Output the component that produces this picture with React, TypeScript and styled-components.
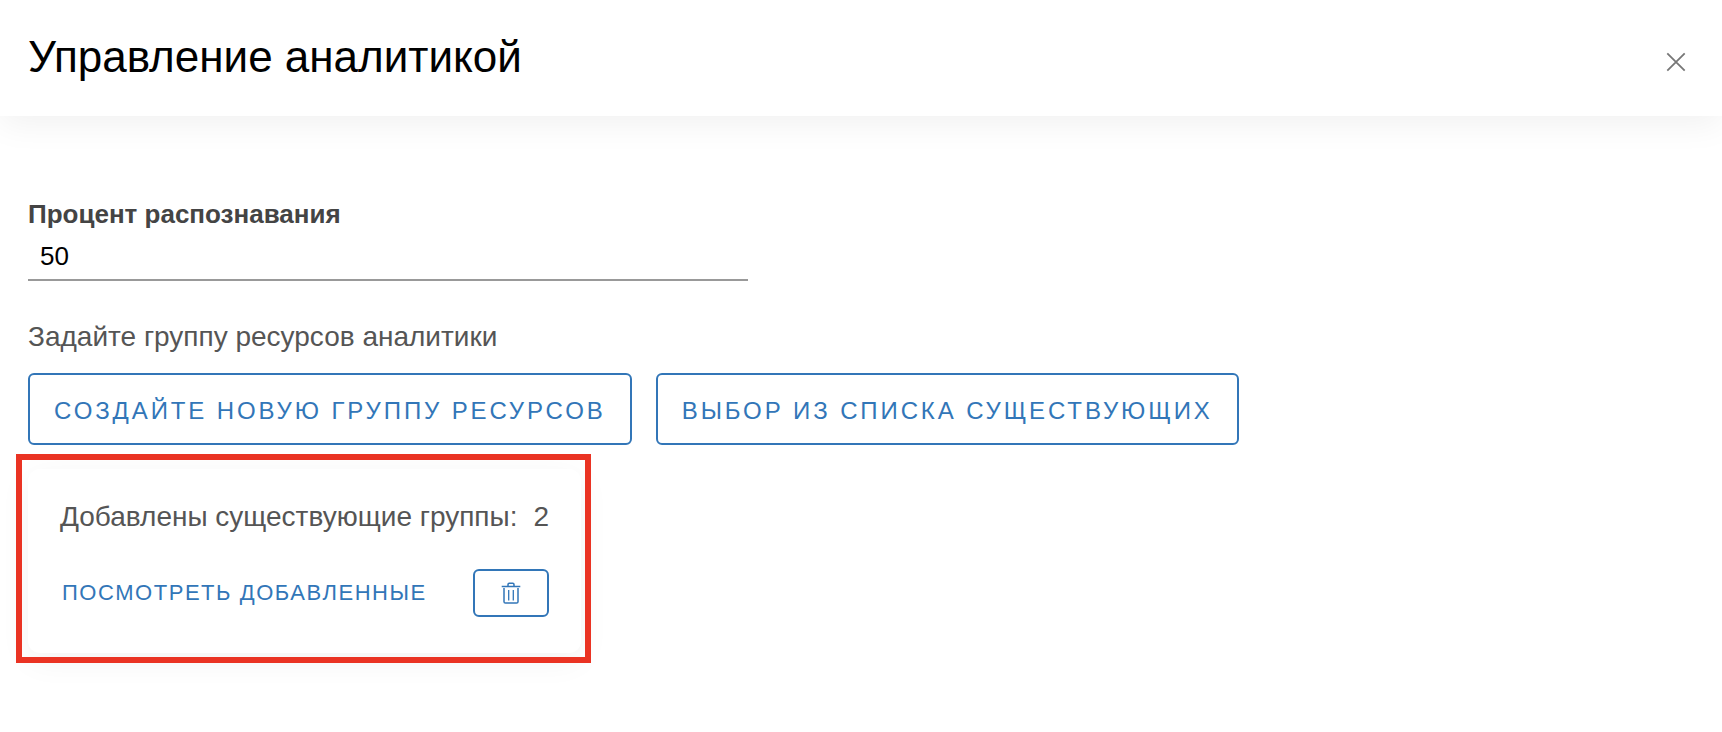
import React from "react";
import styled, { createGlobalStyle } from "styled-components";

const GlobalStyle = createGlobalStyle`
  *, *::before, *::after { box-sizing: border-box; }
  body {
    margin: 0;
    background: #fff;
    color: #555;
    font-family: "Liberation Sans", Arial, sans-serif;
  }
  button, input { font-family: inherit; }
`;

const Page = styled.div`
  min-height: 100vh;
`;

const Header = styled.header`
  display: flex;
  align-items: center;
  justify-content: space-between;
  height: 116px;
  padding: 0 36px 0 28px;
  background: #fff;
  box-shadow: 0 8px 32px rgba(0, 0, 0, 0.06);
`;

const Title = styled.h1`
  margin: 0;
  padding-bottom: 2px;
  color: #000;
  font-size: 44px;
  font-weight: 400;
  line-height: 52px;
`;

const CloseButton = styled.button`
  display: flex;
  margin: 8px 0 0;
  padding: 0;
  border: 0;
  background: none;
  color: #777;
  cursor: pointer;
`;

const Content = styled.main`
  display: flex;
  flex-direction: column;
  align-items: flex-start;
  padding: 82px 28px 40px;
`;

const Field = styled.div`
  display: flex;
  flex-direction: column;
  width: 100%;
  max-width: 720px;
`;

const Label = styled.label`
  color: #444;
  font-size: 26px;
  font-weight: 700;
  line-height: 32px;
`;

const Input = styled.input`
  height: 51px;
  padding: 4px 12px 0;
  border: 0;
  border-bottom: 2px solid #999;
  border-radius: 0;
  outline: 0;
  background: transparent;
  color: #000;
  font-size: 26px;
`;

const Text = styled.p`
  margin: 0;
  font-size: 28px;
  line-height: 32px;
`;

const GroupHint = styled(Text)`
  margin-top: 40px;
`;

const Actions = styled.div`
  display: flex;
  flex-wrap: wrap;
  gap: 24px;
  margin-top: 20px;
`;

const OutlineButton = styled.button`
  display: flex;
  align-items: center;
  justify-content: center;
  height: 72px;
  padding: 4px 24px 0;
  border: 2px solid #3276b8;
  border-radius: 6px;
  background: #fff;
  color: #3276b8;
  font-size: 24px;
  letter-spacing: 0.12em;
  text-transform: uppercase;
  cursor: pointer;
`;

const IconButton = styled(OutlineButton)`
  width: 76px;
  height: 48px;
  padding: 0;
`;

const Card = styled.section`
  position: relative;
  display: flex;
  flex-direction: column;
  gap: 36px;
  margin-top: 24px;
  padding: 32px 32px 36px;
  border-radius: 12px;
  background: #fff;
  box-shadow: 0 8px 32px rgba(0, 0, 0, 0.05);

  &::after {
    content: "";
    position: absolute;
    inset: -15px -10px -10px -12px;
    border: 6px solid #ea3323;
    pointer-events: none;
  }
`;

const Summary = styled(Text)`
  display: flex;
  justify-content: space-between;
  gap: 16px;
`;

const CardActions = styled.div`
  display: flex;
  align-items: center;
  justify-content: space-between;
`;

const LinkButton = styled.button`
  padding: 0 2px;
  border: 0;
  background: none;
  color: #3276b8;
  font-size: 22px;
  line-height: 28px;
  letter-spacing: 0.07em;
  text-transform: uppercase;
  cursor: pointer;
`;

const CloseIcon = () => (
  <svg width="20" height="20" viewBox="0 0 20 20" fill="none" stroke="currentColor" strokeWidth="1.8" aria-hidden="true">
    <path d="M1.3 1.3l17.4 17.4M18.7 1.3L1.3 18.7" />
  </svg>
);

const TrashIcon = () => (
  <svg width="20" height="24" viewBox="0 0 20 24" fill="none" stroke="currentColor" strokeWidth="1.5" aria-hidden="true">
    <path d="M.7 5.5h18.6M7 5V3.4c0-.8.4-1.2 1.2-1.2h3.6c.8 0 1.2.4 1.2 1.2V5" />
    <path d="M3 7v13.7c0 .9.5 1.4 1.4 1.4h11.2c.9 0 1.4-.5 1.4-1.4V7" />
    <path d="M7.7 9v10.5M12.3 9v10.5" strokeWidth="1.3" />
  </svg>
);

export default function App() {
  return (
    <Page>
      <GlobalStyle />
      <Header>
        <Title>Управление аналитикой</Title>
        <CloseButton type="button" aria-label="Закрыть">
          <CloseIcon />
        </CloseButton>
      </Header>
      <Content>
        <Field>
          <Label htmlFor="percent">Процент распознавания</Label>
          <Input id="percent" type="text" inputMode="numeric" defaultValue="50" />
        </Field>
        <GroupHint>Задайте группу ресурсов аналитики</GroupHint>
        <Actions>
          <OutlineButton type="button">Создайте новую группу ресурсов</OutlineButton>
          <OutlineButton type="button">Выбор из списка существующих</OutlineButton>
        </Actions>
        <Card>
          <Summary>
            <span>Добавлены существующие группы:</span>
            <span>2</span>
          </Summary>
          <CardActions>
            <LinkButton type="button">Посмотреть добавленные</LinkButton>
            <IconButton type="button" aria-label="Удалить">
              <TrashIcon />
            </IconButton>
          </CardActions>
        </Card>
      </Content>
    </Page>
  );
}
